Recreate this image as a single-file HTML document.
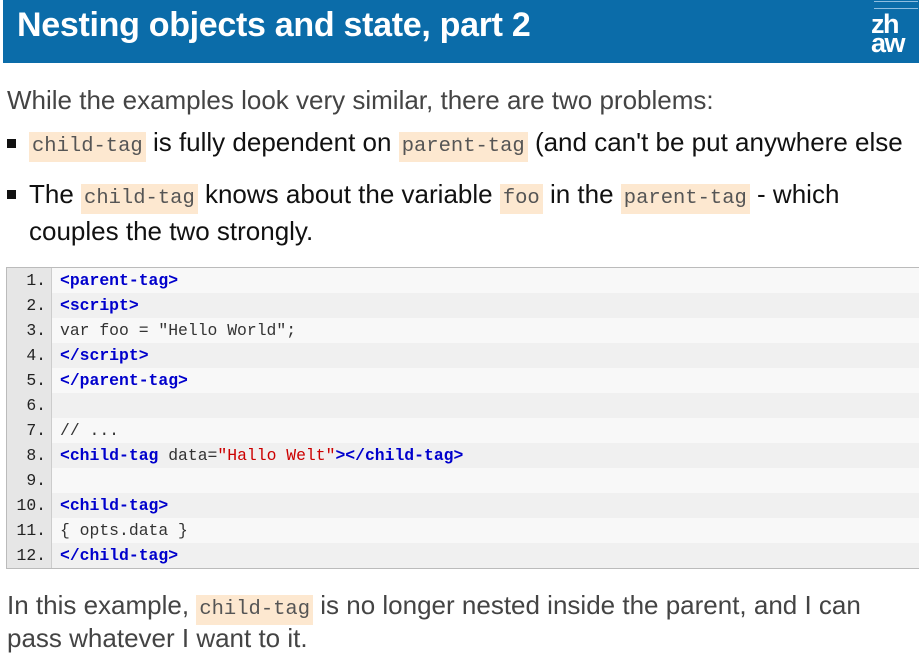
<!DOCTYPE html>
<html><head><meta charset="utf-8"><style>
body{margin:0;width:919px;height:656px;overflow:hidden;background:#fff;font-family:"Liberation Sans",Arial,sans-serif;position:relative}
.hdr{position:absolute;left:3px;top:0;width:916px;height:63px;background:#0b6ca9}
.hdr h1{position:absolute;left:14px;top:6px;margin:0;color:#fff;font-size:34px;font-weight:bold;letter-spacing:-0.3px;white-space:nowrap}
.logo{position:absolute;left:868px;top:15px;color:#fff;font-weight:bold;font-size:27px;line-height:19px;letter-spacing:-1.5px}
.tiny{position:absolute;left:871px;top:1px;width:44px;height:6px;border-top:1px solid #8fbde0;border-bottom:1px solid #8fbde0}
.t{position:absolute;left:7px;white-space:nowrap;font-size:26px;color:#444}
.b{position:absolute;left:29px;white-space:nowrap;font-size:26px;color:#111}
.sq{position:absolute;left:7px;width:9px;height:9px;background:#111}
code{font-family:"Liberation Mono","Courier New",monospace;font-size:20.5px;color:#555;background:#fde8d0;padding:3px 3px 4px}
.code{position:absolute;left:6px;top:267px;width:913px;height:302px;border:1px solid #bbb;border-right:none;box-sizing:border-box;font-family:"Liberation Mono",monospace;font-size:16.4px}
.row{height:25px;line-height:25px;display:flex;white-space:pre}
.row:nth-child(odd){background:#f8f8f8}
.row:nth-child(even){background:#f0f0f0}
.n{width:45px;text-align:right;padding-right:5px;box-sizing:border-box;background:#e6e6e6;border-right:1px solid #ccc;color:#222}
.c{padding-left:8px;color:#333}
.k{color:#0000cc;font-weight:bold}
.s{color:#c00}
</style></head><body>
<div class="hdr"><h1>Nesting objects and state, part 2</h1><div class="tiny"></div><div class="logo">zh<br>aw</div></div>
<div class="t" style="top:85px">While the examples look very similar, there are two problems:</div>
<div class="sq" style="top:139px"></div>
<div class="b" style="top:127px"><code>child-tag</code> is fully dependent on <code>parent-tag</code> (and can't be put anywhere else</div>
<div class="sq" style="top:190px"></div>
<div class="b" style="top:179px">The <code>child-tag</code> knows about the variable <code>foo</code> in the <code>parent-tag</code> - which</div>
<div class="b" style="top:216px">couples the two strongly.</div>
<div class="code">
<div class="row"><div class="n">1.</div><div class="c"><span class="k">&lt;parent-tag&gt;</span></div></div>
<div class="row"><div class="n">2.</div><div class="c"><span class="k">&lt;script&gt;</span></div></div>
<div class="row"><div class="n">3.</div><div class="c">var foo = "Hello World";</div></div>
<div class="row"><div class="n">4.</div><div class="c"><span class="k">&lt;/script&gt;</span></div></div>
<div class="row"><div class="n">5.</div><div class="c"><span class="k">&lt;/parent-tag&gt;</span></div></div>
<div class="row"><div class="n">6.</div><div class="c"></div></div>
<div class="row"><div class="n">7.</div><div class="c">// ...</div></div>
<div class="row"><div class="n">8.</div><div class="c"><span class="k">&lt;child-tag</span> data=<span class="s">"Hallo Welt"</span><span class="k">&gt;&lt;/child-tag&gt;</span></div></div>
<div class="row"><div class="n">9.</div><div class="c"></div></div>
<div class="row"><div class="n">10.</div><div class="c"><span class="k">&lt;child-tag&gt;</span></div></div>
<div class="row"><div class="n">11.</div><div class="c">{ opts.data }</div></div>
<div class="row"><div class="n">12.</div><div class="c"><span class="k">&lt;/child-tag&gt;</span></div></div>
</div>
<div class="t" style="top:590px">In this example, <code>child-tag</code> is no longer nested inside the parent, and I can</div>
<div class="t" style="top:623px">pass whatever I want to it.</div>
</body></html>
